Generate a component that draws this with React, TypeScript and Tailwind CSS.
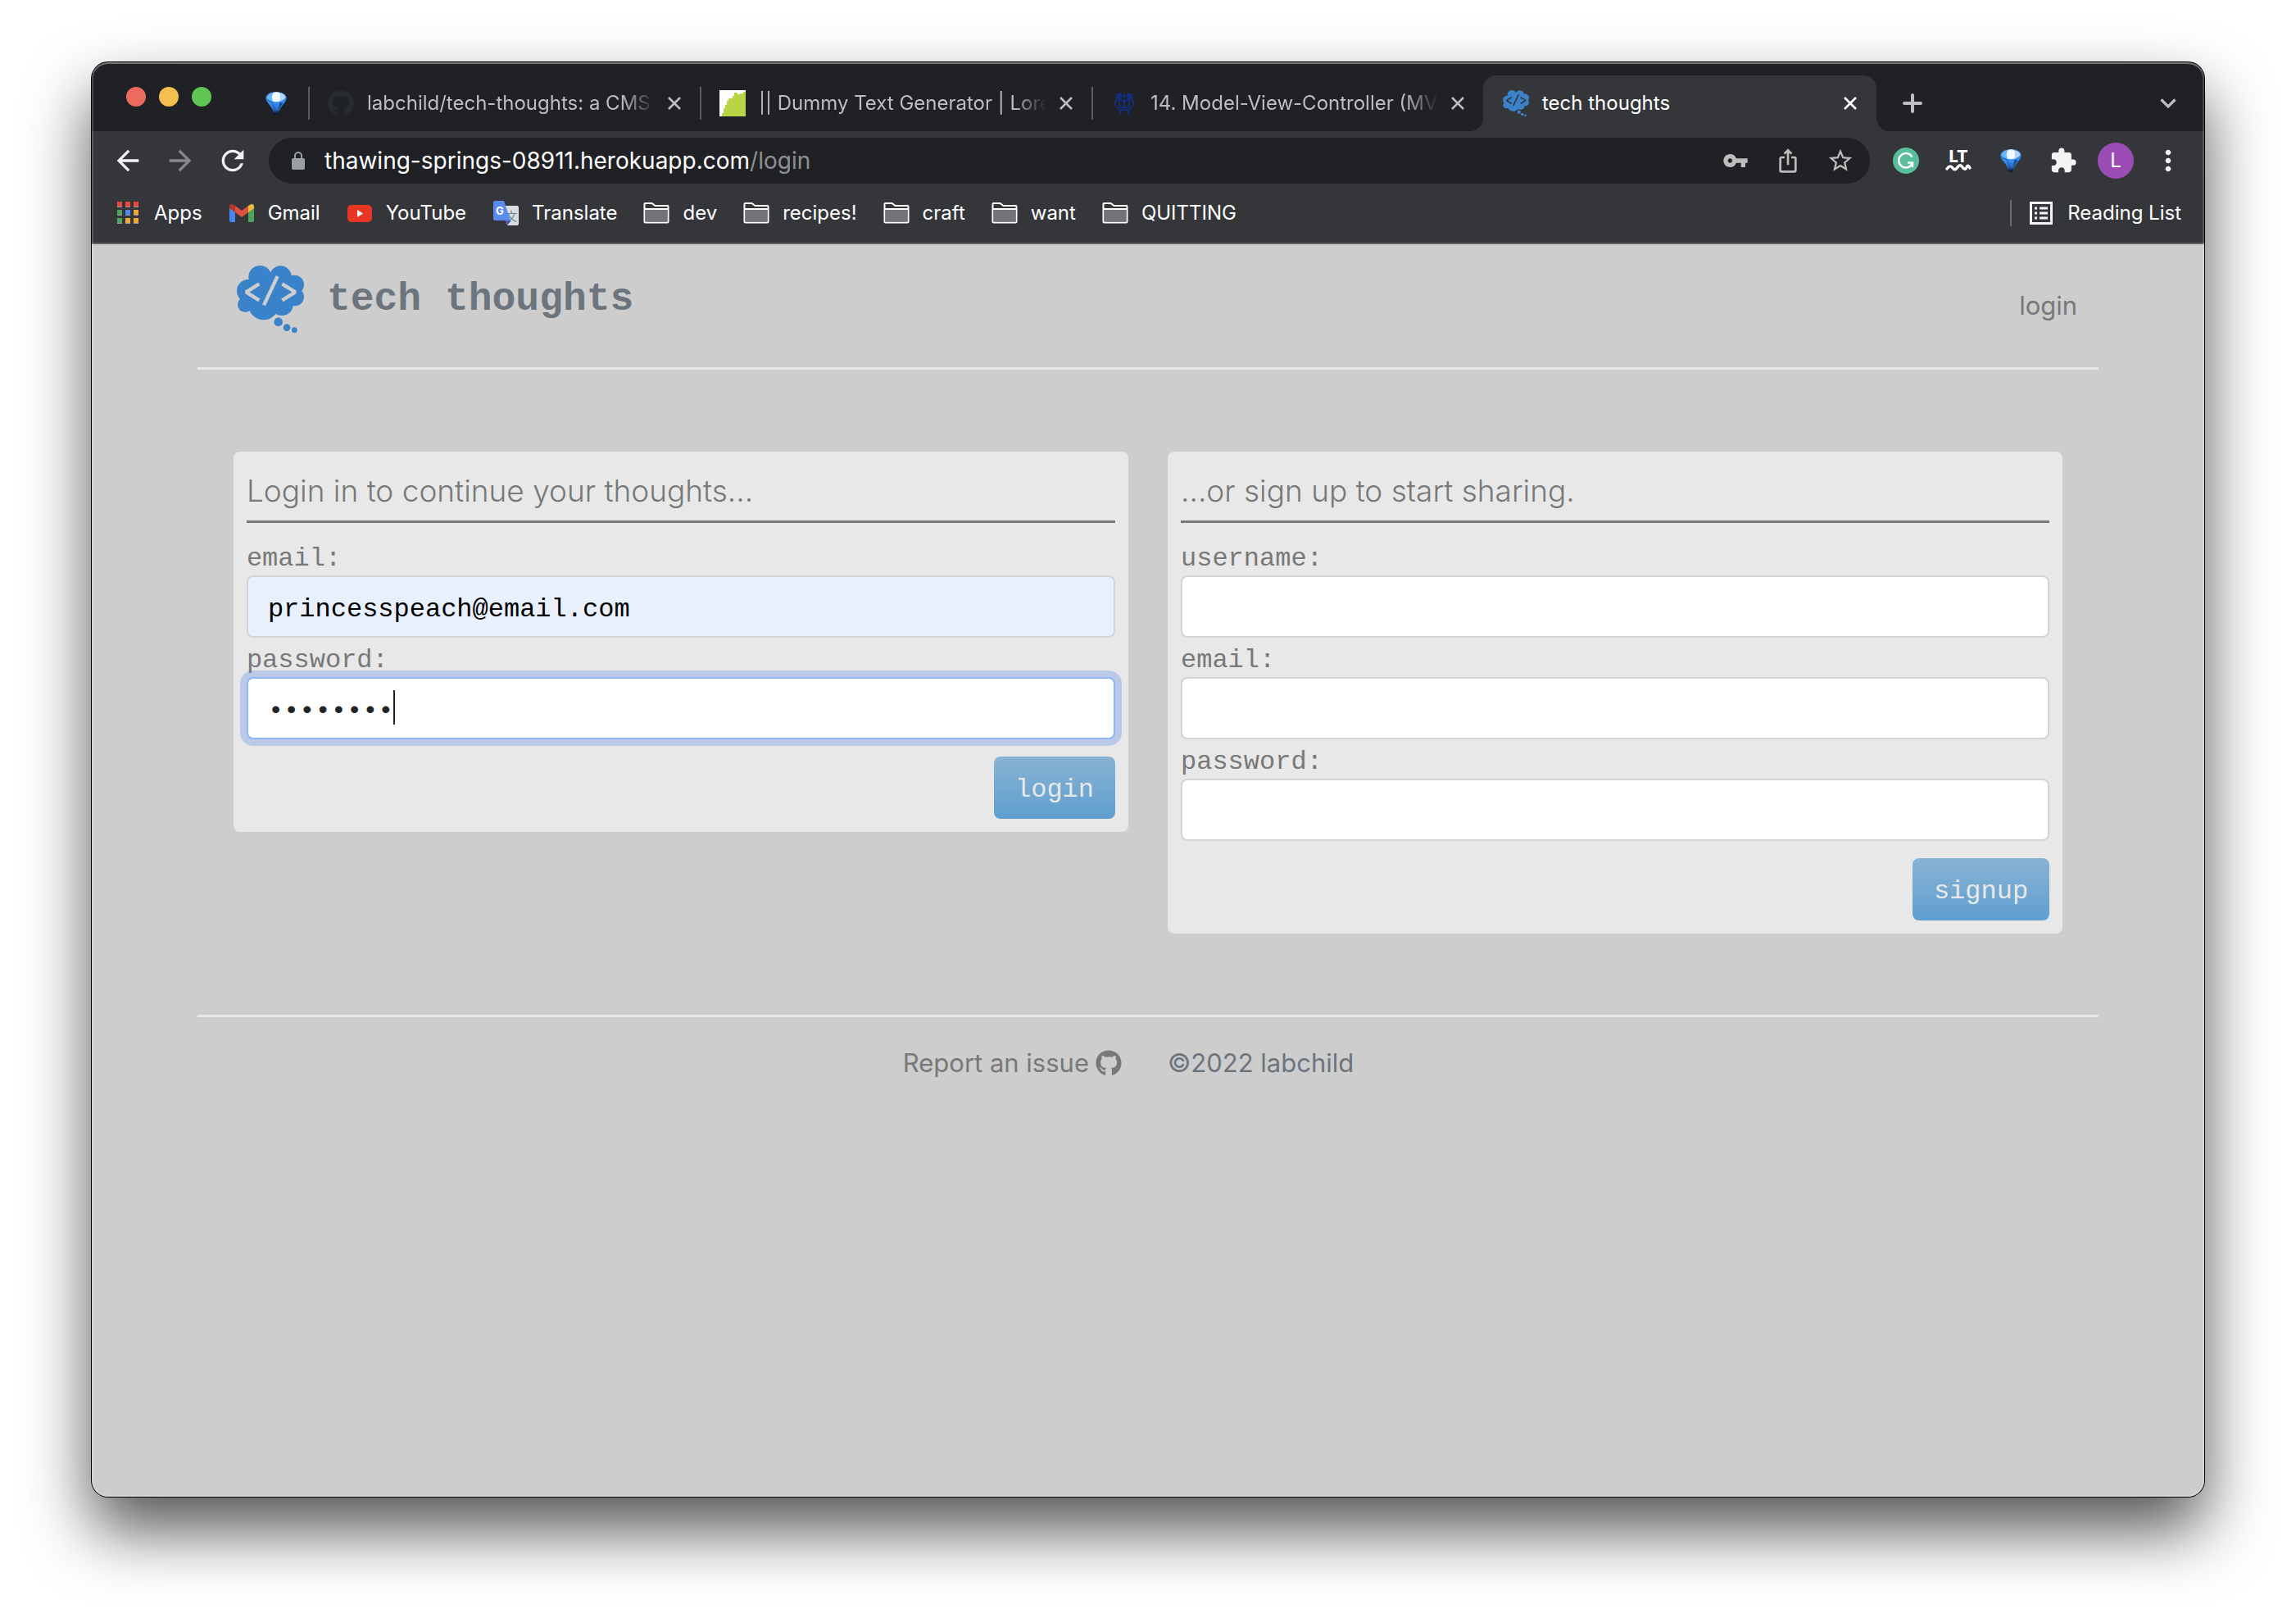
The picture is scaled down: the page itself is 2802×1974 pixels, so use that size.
import React, { useId } from "react";
import type { ReactNode } from "react";
import { FaGithub } from "react-icons/fa";
import {
  MdArrowBack,
  MdArrowForward,
  MdExtension,
  MdIosShare,
  MdMoreVert,
  MdRefresh,
  MdStarBorder,
  MdVpnKey,
} from "react-icons/md";

const MONO = "font-['Liberation_Mono',monospace]";

/* ---------- drawings ---------- */

function ThoughtLogo({ className, codeClass }: { className: string; codeClass: string }) {
  return (
    <svg viewBox="57 72 246 246" className={className} aria-hidden="true">
      <g fill="#3a83cb">
        <circle cx="142" cy="114" r="42" />
        <circle cx="217" cy="113" r="40" />
        <circle cx="268" cy="142" r="35" />
        <circle cx="270" cy="187" r="33" />
        <circle cx="222" cy="213" r="42" />
        <circle cx="155" cy="215" r="56" />
        <circle cx="88" cy="215" r="28" />
        <circle cx="99" cy="165" r="42" />
        <ellipse cx="182" cy="165" rx="80" ry="68" />
        <circle cx="209" cy="278" r="16" />
        <circle cx="240" cy="299" r="13" />
        <circle cx="268" cy="308" r="10" />
      </g>
      <g className={codeClass} fill="none" strokeWidth="13" strokeLinejoin="bevel">
        <polyline points="139,139 91,169 139,199" />
        <polyline points="223,139 271,169 223,199" />
        <line x1="206" y1="111" x2="156" y2="217" />
      </g>
    </svg>
  );
}

function Balloon({ className }: { className: string }) {
  const id = useId();
  return (
    <svg viewBox="0 0 80 86" className={className} aria-hidden="true">
      <defs>
        <linearGradient id={id} x1="0" y1="0" x2="0" y2="1">
          <stop offset="0" stopColor="#2a7be0" />
          <stop offset="0.5" stopColor="#3a8ff0" />
          <stop offset="0.8" stopColor="#2767c4" />
          <stop offset="0.9" stopColor="#123463" />
          <stop offset="1" stopColor="#0a1220" />
        </linearGradient>
      </defs>
      <path d="M1 20C6 6 22 0 40 0s34 6 39 20c1 9-5 18-12 27-8 10-14 20-18 30l-2 8H33l-2-8C27 67 21 57 13 47 6 38 0 29 1 20Z" fill={`url(#${id})`} />
      <path d="M4 21C10 8 20 4 29 3c-6 9-6 20-2 33C17 34 8 29 4 21Z" fill="#6db8f7" />
      <path d="M29 3c7-3 17-3 24 0 4 8 5 21 1 33-8 2-19 2-27 0-4-12-4-23 2-33Z" fill="#f2f8ff" />
      <path d="M53 3c12 2 20 8 23 17-4 8-12 13-22 16 4-12 3-25-1-33Z" fill="#b4d7f9" />
      <path d="M66 42c-7 9-13 18-18 30l-2 5 8-38Z" fill="#174a94" />
      <path d="M8 31c6 4 12 7 18 8l11 38" fill="none" stroke="#15407f" strokeWidth="2" />
    </svg>
  );
}

function LockIcon() {
  return (
    <svg viewBox="0 0 16 22" className="h-[22px] w-4 shrink-0" aria-hidden="true">
      <rect x="0" y="8" width="16" height="14" rx="2" fill="#9aa0a6" />
      <path d="M4 9V5a4 4 0 0 1 8 0v4" fill="none" stroke="#9aa0a6" strokeWidth="2" />
    </svg>
  );
}

function DummyTextIcon() {
  return (
    <svg viewBox="0 0 32 32" className="size-8" aria-hidden="true">
      <rect width="32" height="32" fill="#fff" />
      <path d="M32 2h-3v2h-4v1h-3V3h-4v4h-2v3h-5v3H9v5H7v4H5v6H3v4h29Z" fill="#b9d444" />
    </svg>
  );
}

function CrownIcon() {
  return (
    <svg viewBox="0 0 32 32" className="size-8" fill="none" stroke="#10308f" strokeWidth="1.600" aria-hidden="true">
      <path d="M6 5l5 4M10 3l2 6M5 9l5 1M26 5l-5 4M22 3l-2 6M27 9l-5 1" />
      <circle cx="10" cy="7" r="2" />
      <circle cx="22" cy="7" r="2" />
      <path d="M16 4v6M14 7h4" />
      <path d="M6 20C3 14 6 11 10 11c3 0 5 2 6 5 1-3 3-5 6-5 4 0 7 3 4 9M11 21c-2-5-1-8 0-9M21 21c2-5 1-8 0-9M16 11v10" />
      <path d="M7 21h18M8 24h16" />
      <path d="M12 25l-2 4M20 25l2 4M9 29h3M20 29h3" />
    </svg>
  );
}

function AppsIcon() {
  const colors = ["#e8493e", "#e8493e", "#e8493e", "#4fa25d", "#4a8af4", "#eda93a", "#4fa25d", "#eda93a", "#eda93a"];
  return (
    <svg viewBox="0 0 32 32" className="size-8" aria-hidden="true">
      {colors.map((c, i) => (
        <g key={i}>
          <rect x={3 + (i % 3) * 10} y={2 + Math.floor(i / 3) * 10} width="6" height="7" fill="#9a9b9e" />
          <rect x={3 + (i % 3) * 10} y={2 + Math.floor(i / 3) * 10} width="6" height="6" fill={c} />
        </g>
      ))}
    </svg>
  );
}

function GmailIcon() {
  return (
    <svg viewBox="0 0 32 32" className="size-8" aria-hidden="true">
      <path d="M1 9v16a2 2 0 0 0 2 2h5V14Z" fill="#4a86f0" />
      <path d="M31 9v16a2 2 0 0 1-2 2h-5V14Z" fill="#4ea55a" />
      <path d="M24 7v8l7-5V8c0-3-3-4-5-2Z" fill="#f1bb3c" />
      <path d="M8 7v8l-7-5V8c0-3 3-4 5-2Z" fill="#b73427" />
      <path d="M8 7l8 6 8-6v8l-8 6-8-6Z" fill="#df5143" />
    </svg>
  );
}

function YouTubeIcon() {
  return (
    <svg viewBox="0 0 32 32" className="size-8" aria-hidden="true">
      <rect x="1" y="6" width="30" height="21" rx="5" fill="#e93524" />
      <path d="M13 12v9l7-4.5Z" fill="#fff" />
    </svg>
  );
}

function TranslateIcon() {
  return (
    <svg viewBox="0 0 32 32" className="size-8" aria-hidden="true">
      <path d="M12 7h18a2 2 0 0 1 2 2v20a2 2 0 0 1-2 2H18Z" fill="#dcdde0" />
      <text x="16" y="25" fontSize="14" fill="#6b8794" fontFamily="Noto Sans CJK SC, sans-serif">文</text>
      <path d="M17 25h6l-5 6Z" fill="#3c53b8" />
      <path d="M3 1h11l8 24H3a2 2 0 0 1-2-2V3a2 2 0 0 1 2-2Z" fill="#5b8bee" />
      <text x="4" y="18" fontSize="13" fontWeight="700" fill="#fff" fontFamily="Inter, sans-serif">G</text>
    </svg>
  );
}

function FolderIcon() {
  return (
    <svg viewBox="0 0 32 32" className="size-8" aria-hidden="true">
      <path d="M1.500 5a1 1 0 0 1 1-1h8l4 3h15a1 1 0 0 1 1 1v18.500a1 1 0 0 1-1 1h-27a1 1 0 0 1-1-1Z" fill="#35363a" stroke="#fff" strokeWidth="2" />
      <rect x="2.500" y="11" width="27" height="15.500" fill="#737477" />
      <path d="M2 11h28" stroke="#fff" strokeWidth="2" />
    </svg>
  );
}

function ReadingListIcon() {
  return (
    <svg viewBox="0 0 28 28" className="size-7" aria-hidden="true">
      <rect x="1.500" y="1.500" width="25" height="25" fill="none" stroke="#f1f3f4" strokeWidth="3" />
      <path d="M6 8h3M6 14h3M6 20h3M12 8h10M12 14h10M12 20h10" stroke="#f1f3f4" strokeWidth="3" />
    </svg>
  );
}

function GrammarlyIcon() {
  return (
    <svg viewBox="0 0 32 32" className="size-8" aria-hidden="true">
      <circle cx="16" cy="16" r="16" fill="#58be9b" />
      <path d="M23.500 11.500A8.700 8.700 0 1 0 24 19M18 18.500h6v5.500" fill="none" stroke="#fff" strokeWidth="2.400" />
    </svg>
  );
}

function LanguageToolIcon() {
  return (
    <span className="flex flex-col items-center text-xl leading-4 font-extrabold text-white">
      LT
      <svg viewBox="0 0 32 10" className="h-2.5 w-8" aria-hidden="true">
        <path d="M2 7c3-4 5-4 7-1s4 2 6-1 4-3 6 0 4 3 5 0 3-2 4 1" fill="none" stroke="#fff" strokeWidth="3.400" strokeLinecap="round" />
      </svg>
    </span>
  );
}

function CloseIcon() {
  return (
    <svg viewBox="0 0 16 16" className="size-4" stroke="currentColor" strokeWidth="2.600" aria-hidden="true">
      <path d="M1 1l14 14M15 1L1 15" />
    </svg>
  );
}

/* ---------- browser frame ---------- */

function Tab({ icon, title }: { icon: ReactNode; title: string }) {
  return (
    <div className="flex w-[478px] min-w-0 items-center pr-[23px] text-[#bcbec2]">
      <span className="h-10 w-0.5 shrink-0 bg-[#5a5b5f]" />
      <span className="ml-[22px] flex size-8 shrink-0 items-center justify-center">{icon}</span>
      <span className="ml-4 min-w-0 flex-1 overflow-hidden whitespace-nowrap [mask-image:linear-gradient(to_right,#000_calc(100%-40px),transparent)]">
        {title}
      </span>
      <button type="button" aria-label={`Close ${title}`} className="ml-4 shrink-0">
        <CloseIcon />
      </button>
    </div>
  );
}

function TabStrip() {
  return (
    <div className="flex h-[84px] bg-[#202124] text-2xl leading-8">
      <div className="flex w-[264px] shrink-0 items-center pl-[42px]">
        <div className="flex gap-4">
          <button type="button" aria-label="Close window" className="size-6 rounded-full bg-[#ed6a5f]" />
          <button type="button" aria-label="Minimise window" className="size-6 rounded-full bg-[#f5bf4f]" />
          <button type="button" aria-label="Zoom window" className="size-6 rounded-full bg-[#61c554]" />
        </div>
        <Balloon className="mt-4 ml-[66px] h-7 w-[26px]" />
      </div>
      <div className="flex min-w-0 flex-1 pt-4">
        <Tab icon={<FaGithub className="size-8 text-[#282c31]" />} title="labchild/tech-thoughts: a CMS" />
        <Tab icon={<DummyTextIcon />} title="|| Dummy Text Generator | Lorem" />
        <Tab icon={<CrownIcon />} title="14. Model-View-Controller (MVC)" />
        <div className="relative flex w-[480px] min-w-0 items-center rounded-t-2xl bg-[#35363a] px-6 text-white">
          <span className="absolute bottom-0 -left-4 size-4 bg-[radial-gradient(circle_at_0_0,transparent_16px,#35363a_16px)]" />
          <span className="absolute -right-4 bottom-0 size-4 bg-[radial-gradient(circle_at_100%_0,transparent_16px,#35363a_16px)]" />
          <ThoughtLogo className="size-8 shrink-0" codeClass="stroke-[#35363a]" />
          <span className="ml-4 flex-1 whitespace-nowrap">tech thoughts</span>
          <button type="button" aria-label="Close tech thoughts">
            <CloseIcon />
          </button>
        </div>
        <button type="button" aria-label="New tab" className="ml-8 text-[#bcbec2]">
          <svg viewBox="0 0 24 24" className="size-6" stroke="currentColor" strokeWidth="4" strokeLinecap="round" aria-hidden="true">
            <path d="M12 2v20M2 12h20" />
          </svg>
        </button>
        <button type="button" aria-label="Search tabs" className="mr-[34px] ml-auto text-[#bcbec2]">
          <svg viewBox="0 0 20 12" className="h-3 w-5" fill="none" stroke="currentColor" strokeWidth="3.200" aria-hidden="true">
            <path d="M1.500 1.500L10 10l8.500-8.500" />
          </svg>
        </button>
      </div>
    </div>
  );
}

function ToolButton({ label, children }: { label: string; children: ReactNode }) {
  return (
    <button type="button" aria-label={label} className="flex w-16 shrink-0 items-center justify-center">
      {children}
    </button>
  );
}

function Toolbar() {
  return (
    <div className="flex h-[72px] items-center px-3 text-[#f1f3f4]">
      <ToolButton label="Back"><MdArrowBack className="size-10" /></ToolButton>
      <ToolButton label="Forward"><MdArrowForward className="size-10 text-[#88898c]" /></ToolButton>
      <ToolButton label="Reload"><MdRefresh className="size-10" /></ToolButton>
      <div className="mx-3 flex h-14 min-w-0 flex-1 items-center rounded-full bg-[#202124] pr-1 pl-7 text-[#bcbcbc]">
        <LockIcon />
        <span className="ml-6 flex-1 text-[28px] leading-9 whitespace-nowrap text-[#8e8f92]">
          <span className="text-white">thawing-springs-08911.herokuapp.com</span>/login
        </span>
        <ToolButton label="Saved passwords"><MdVpnKey className="size-8" /></ToolButton>
        <ToolButton label="Share"><MdIosShare className="size-8" /></ToolButton>
        <ToolButton label="Bookmark this page"><MdStarBorder className="size-[34px]" /></ToolButton>
      </div>
      <ToolButton label="Grammarly"><GrammarlyIcon /></ToolButton>
      <ToolButton label="LanguageTool"><LanguageToolIcon /></ToolButton>
      <ToolButton label="Balloon"><Balloon className="h-7 w-[26px]" /></ToolButton>
      <ToolButton label="Extensions"><MdExtension className="size-[34px]" /></ToolButton>
      <ToolButton label="Profile">
        <span className="flex size-11 items-center justify-center rounded-full bg-[#9c4db5] text-2xl text-white">L</span>
      </ToolButton>
      <ToolButton label="Menu"><MdMoreVert className="size-10" /></ToolButton>
    </div>
  );
}

const bookmarks: { name: string; icon: ReactNode }[] = [
  { name: "Apps", icon: <AppsIcon /> },
  { name: "Gmail", icon: <GmailIcon /> },
  { name: "YouTube", icon: <YouTubeIcon /> },
  { name: "Translate", icon: <TranslateIcon /> },
  { name: "dev", icon: <FolderIcon /> },
  { name: "recipes!", icon: <FolderIcon /> },
  { name: "craft", icon: <FolderIcon /> },
  { name: "want", icon: <FolderIcon /> },
  { name: "QUITTING", icon: <FolderIcon /> },
];

function BookmarksBar() {
  return (
    <div className="flex h-[66px] items-center justify-between border-b-2 border-[#5f6064] px-7 pb-2 text-2xl leading-8 text-white">
      <div className="flex gap-8">
        {bookmarks.map((b) => (
          <button key={b.name} type="button" className="flex items-center gap-4 whitespace-nowrap">
            {b.icon}
            {b.name}
          </button>
        ))}
      </div>
      <div className="flex items-center">
        <span className="h-8 w-0.5 bg-[#6b6c70]" />
        <button type="button" className="ml-[22px] flex items-center gap-[18px]">
          <ReadingListIcon />
          Reading List
        </button>
      </div>
    </div>
  );
}

/* ---------- page ---------- */

type FieldProps = { id: string; label: string; type: string; value?: string; state?: "filled" | "focused" };

function Field({ id, label, type, value, state }: FieldProps) {
  const look =
    state === "filled"
      ? "border-[#ced4da] bg-[#e8effd] text-black"
      : state === "focused"
        ? "border-[#8fb4f8] bg-white text-[#212529] shadow-[0_0_0_8px_#bbc9e9]"
        : "border-[#ced4da] bg-white text-[#212529]";
  return (
    <div>
      <label htmlFor={id} className="relative z-10 block pt-2 leading-10">{label}</label>
      <div className="relative">
        <input
          id={id}
          type={type}
          defaultValue={value}
          className={`block h-[76px] w-full rounded-lg border-2 px-6 pt-1.5 outline-none ${look}`}
        />
        {state === "focused" && <span className="absolute top-4 left-[179px] h-[42px] w-0.5 bg-[#212529]" />}
      </div>
    </div>
  );
}

function FormCard({ title, action, fields }: { title: string; action: string; fields: FieldProps[] }) {
  return (
    <form className={`rounded-lg bg-[#e8e8e8] p-4 text-[32px] text-[#787878] ${MONO}`} onSubmit={(e) => e.preventDefault()}>
      <h2 className="mb-4 border-b-[3px] border-[#787878] pt-2 pb-3 font-[Inter,sans-serif] text-[37px] leading-12 font-light">
        {title}
      </h2>
      {fields.map((f) => (
        <Field key={f.id} {...f} />
      ))}
      <div className="mt-[21px] flex justify-end">
        <button
          type="submit"
          className="h-[76px] rounded-lg bg-linear-to-b from-[#88b3d3] to-[#5f9fd0] px-[26px] pt-1.5 text-[#e8e8e8]"
        >
          {action}
        </button>
      </div>
    </form>
  );
}

function Page() {
  return (
    <div className="flex-1 bg-[#cdcdcd] text-[31px] leading-12 text-[#787878]">
      <div className="mx-auto w-[90%]">
        <header className="flex h-[153px] items-center justify-between border-b-[3px] border-[#e8e8e8] pr-[26px] pl-12">
          <a href="#home" className="flex items-center gap-7 pb-4">
            <ThoughtLogo className="size-[82px]" codeClass="stroke-[#cdcdcd]" />
            <h1 className={`text-5xl font-bold text-[#6c757d] ${MONO}`}>tech thoughts</h1>
          </a>
          <a href="#login">login</a>
        </header>
        <main className="grid grid-cols-2 items-start gap-12 px-11 pt-[100px] pb-[99px]">
          <FormCard
            title="Login in to continue your thoughts..."
            action="login"
            fields={[
              { id: "login-email", label: "email:", type: "email", value: "princesspeach@email.com", state: "filled" },
              { id: "login-password", label: "password:", type: "password", value: "password", state: "focused" },
            ]}
          />
          <FormCard
            title="...or sign up to start sharing."
            action="signup"
            fields={[
              { id: "signup-username", label: "username:", type: "text" },
              { id: "signup-email", label: "email:", type: "email" },
              { id: "signup-password", label: "password:", type: "password" },
            ]}
          />
        </main>
        <footer className="grid grid-cols-2 border-t-[3px] border-[#e8e8e8] pt-8">
          <a href="#issues" className="flex items-center justify-end gap-2 pr-8">
            Report an issue <FaGithub className="size-8" />
          </a>
          <span className="pl-6 text-[#6c757d]">©2022 labchild</span>
        </footer>
      </div>
    </div>
  );
}

export default function App() {
  return (
    <div className="flex min-h-screen bg-white px-28 pt-[76px] pb-[148px] font-[Inter,sans-serif]">
      <div className="relative flex min-w-0 flex-1 flex-col overflow-hidden rounded-[20px] bg-[#35363a] shadow-[0_0_0_1px_#000,0_40px_80px_rgba(0,0,0,0.68)]">
        <TabStrip />
        <Toolbar />
        <BookmarksBar />
        <Page />
        <div className="pointer-events-none absolute inset-0 rounded-[20px] shadow-[inset_0_2px_0_rgba(255,255,255,0.25),inset_0_0_0_2px_rgba(255,255,255,0.18)]" />
      </div>
    </div>
  );
}
